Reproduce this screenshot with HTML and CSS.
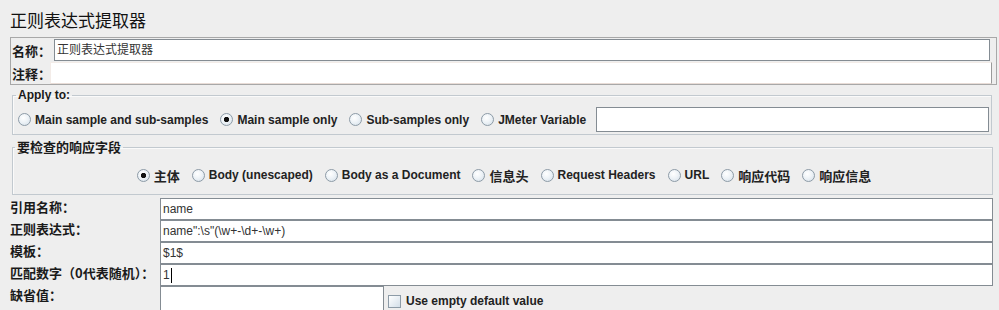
FILE: index.html
```html
<!DOCTYPE html>
<html>
<head>
<meta charset="utf-8">
<link rel="stylesheet" href="styles.css">
</head>
<body>
<div class="title">正则表达式提取器</div>

<div class="namepanel">
  <div class="nrow first">
    <span class="lbl cjk nl">名称：</span>
    <div class="field name">正则表达式提取器</div>
  </div>
  <div class="nrow">
    <span class="lbl cjk cl">注释：</span>
    <div class="field comment"></div>
  </div>
</div>

<fieldset class="group apply">
  <legend>Apply to:</legend>
  <div class="radios">
    <label class="radio"><span class="dot"></span>Main sample and sub-samples</label>
    <label class="radio checked"><span class="dot"></span>Main sample only</label>
    <label class="radio"><span class="dot"></span>Sub-samples only</label>
    <label class="radio"><span class="dot"></span>JMeter Variable</label>
    <div class="field jmvar"></div>
  </div>
</fieldset>

<fieldset class="group resp">
  <legend class="cjk">要检查的响应字段</legend>
  <div class="radios center">
    <label class="radio checked"><span class="dot"></span><span class="cjk">主体</span></label>
    <label class="radio"><span class="dot"></span>Body (unescaped)</label>
    <label class="radio"><span class="dot"></span>Body as a Document</label>
    <label class="radio"><span class="dot"></span><span class="cjk">信息头</span></label>
    <label class="radio"><span class="dot"></span>Request Headers</label>
    <label class="radio"><span class="dot"></span>URL</label>
    <label class="radio"><span class="dot"></span><span class="cjk">响应代码</span></label>
    <label class="radio"><span class="dot"></span><span class="cjk">响应信息</span></label>
  </div>
</fieldset>

<div class="form">
  <span class="lbl cjk">引用名称：</span>
  <div class="field">name</div>
  <span class="lbl cjk">正则表达式：</span>
  <div class="field">name":\s"(\w+-\d+-\w+)</div>
  <span class="lbl cjk">模板：</span>
  <div class="field">$1$</div>
  <span class="lbl cjk">匹配数字（0代表随机）：</span>
  <div class="field">1<span class="caret"></span></div>
  <span class="lbl cjk">缺省值：</span>
  <div class="deflt">
    <div class="field dfield"></div>
    <label class="check"><span class="box"></span>Use empty default value</label>
  </div>
</div>
</body>
</html>
```
FILE: styles.css
```css
html, body {
  margin: 0;
  padding: 0;
}
body {
  background: #eeeeee;
  font-family: "Liberation Sans", "Noto Sans CJK SC", sans-serif;
  font-size: 12px;
  color: #222222;
  width: 999px;
  height: 310px;
  overflow: hidden;
}
.cjk {
  font-family: "Noto Sans CJK SC", "Liberation Sans", sans-serif;
  font-size: 13px;
}
.title {
  font-family: "Noto Sans CJK SC", sans-serif;
  font-size: 17px;
  line-height: 22px;
  padding: 9px 0 0 10px;
  height: 28px;
  color: #111;
}
.namepanel {
  margin: 0 2px 0 10px;
  border: 1px solid #a8a8a8;
  padding: 1px 0 0 0;
  display: flex;
  flex-direction: column;
  gap: 1px;
}
.nrow {
  display: flex;
  align-items: center;
  height: 22px;
}
.lbl {
  font-weight: bold;
  color: #1a1a1a;
  white-space: nowrap;
}
.nl {
  width: 43px;
  padding-left: 1px;
  box-sizing: border-box;
}
.cl {
  width: 39px;
  padding-left: 1px;
  box-sizing: border-box;
}
.field {
  box-sizing: border-box;
  background: #ffffff;
  border: 1px solid #848c93;
  height: 22px;
  line-height: 20px;
  padding: 0 2px;
  color: #333;
  white-space: nowrap;
  overflow: hidden;
  display: flex;
  align-items: center;
}
.name {
  flex: 1;
  margin-right: 6px;
}
.comment {
  flex: 1;
  margin-right: 4px;
  border-color: #f3ece8;
  border-right-color: #9a9a9a;
  border-bottom-color: #e8dcd6;
}
.group {
  border: 1px solid #c2c9cf;
  box-shadow: inset 1px 1px 0 #fafafa;
  margin: 0;
  min-width: 0;
}
.group legend {
  font-weight: bold;
  color: #1a1a1a;
  padding: 0 2px;
}
.apply {
  margin: 3px 7px 0 12px;
  padding: 0 2px 2px 5px;
}
.apply legend {
  line-height: 14px;
  margin-left: -2px;
}
.apply .radios {
  margin-top: 5px;
  height: 25px;
}
.radios {
  display: flex;
  align-items: center;
  font-weight: bold;
  white-space: nowrap;
}
.radios.center {
  justify-content: center;
}
.radio {
  display: flex;
  align-items: center;
  gap: 4px;
  color: #222;
}
.radio + .radio {
  margin-left: 12px;
}
.radio .cjk {
  font-size: 13px;
}
.dot {
  width: 13px;
  height: 13px;
  box-sizing: border-box;
  border-radius: 50%;
  border: 1px solid #8d9ba7;
  background: radial-gradient(circle at 40% 35%, #ffffff 0%, #eef3f7 45%, #d3dee8 100%);
}
.checked .dot {
  background:
    radial-gradient(circle at 50% 50%, #111 0, #111 2.3px, rgba(0,0,0,0) 3px),
    radial-gradient(circle at 40% 35%, #ffffff 0%, #eef3f7 45%, #d3dee8 100%);
}
.jmvar {
  flex: 1;
  height: 25px;
  margin-left: 10px;
}
.resp {
  margin: 4px 6px 0 12px;
  padding: 0 2px 9px 5px;
}
.resp legend {
  line-height: 16px;
  margin-left: -3px;
}
.resp .radios {
  margin-top: 10px;
  height: 20px;
}
.form {
  margin: 3px 0 0 10px;
  display: grid;
  grid-template-columns: 150px 833px;
  grid-auto-rows: 22px;
}
.form .lbl {
  align-self: start;
  line-height: 18px;
}
.caret {
  display: inline-block;
  width: 1px;
  height: 15px;
  background: #000;
  margin-left: 1px;
}
.deflt {
  display: flex;
  align-items: center;
  height: 30px;
}
.dfield {
  width: 224px;
  height: 30px;
}
.check {
  display: flex;
  align-items: center;
  gap: 5px;
  margin-left: 4px;
  font-weight: bold;
  color: #222;
}
.box {
  width: 13px;
  height: 13px;
  box-sizing: border-box;
  border: 1px solid #8d9ba7;
  background: linear-gradient(135deg, #ffffff 0%, #e9eff4 50%, #d3dee8 100%);
}
```
